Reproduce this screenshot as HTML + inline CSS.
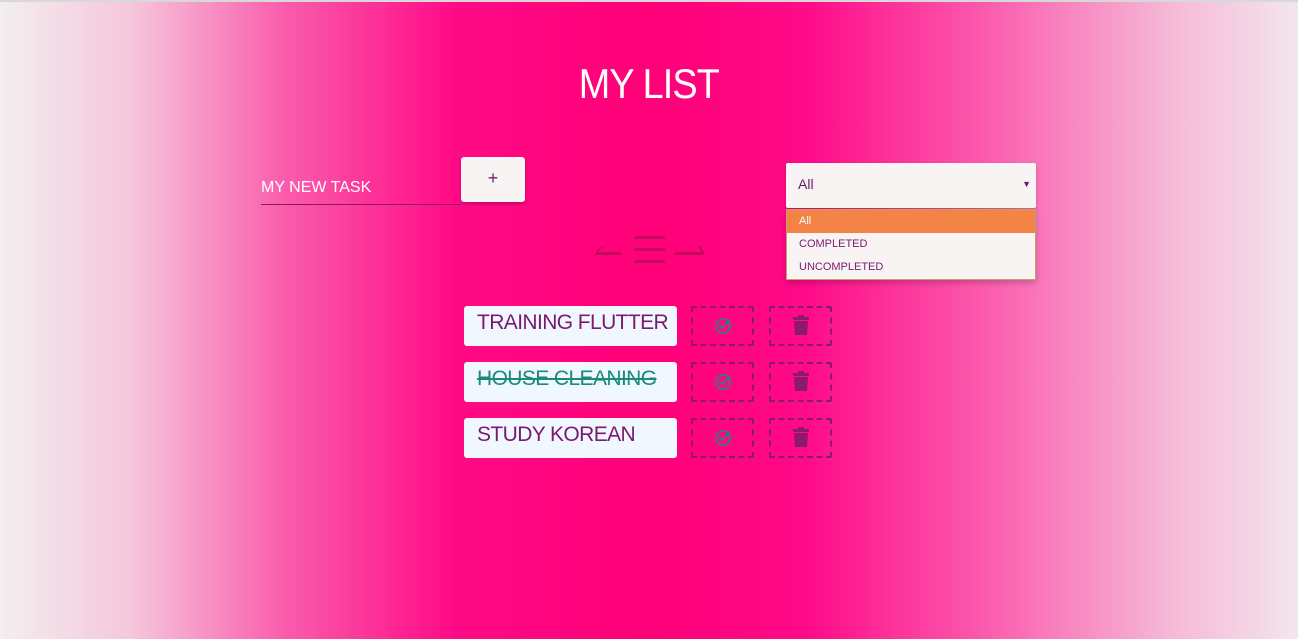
<!DOCTYPE html>
<html><head><style>
html,body{margin:0;padding:0;width:1298px;height:639px;overflow:hidden}
body{position:relative;font-family:"Liberation Sans",sans-serif;
background:linear-gradient(90deg,#f3eef0 0%,#f5c7dc 10%,#fa5cac 22%,#ff0a86 35%,#ff0078 50%,#ff0a88 62%,#fb5cae 76%,#f6b7d6 90%,#f3e6ee 100%);}
body:before{content:"";position:absolute;left:0;top:0;width:1298px;height:2px;background:#d8d8d8}
.t{position:absolute;left:0;width:1298px;top:60px;text-align:center;color:#fff;font-size:42px;font-weight:normal;letter-spacing:-1px}
.t span{display:inline-block;transform:scaleX(0.9)}
.inp{position:absolute;left:261px;top:178px;width:200px;height:26px;border-bottom:1px solid #8a1a5a;color:#fff;font-size:16px;line-height:20px}
.add{position:absolute;left:461px;top:157px;width:64px;height:45px;background:#f9f4f4;border-radius:3px;box-shadow:0 2px 3px rgba(0,0,0,.25);color:#7a1a6e;text-align:center;line-height:43px;font-size:18px}
.sel{position:absolute;left:786px;top:163px;width:250px;height:45px;background:#f9f4f4;border-radius:2px;box-shadow:0 2px 4px rgba(0,0,0,.2)}
.sel span{position:absolute;left:12px;top:13px;color:#6a1a6e;font-size:14px}
.sel i{position:absolute;right:5px;top:16px;font-style:normal;font-size:9px;color:#6a1a6e}
.dd{position:absolute;left:786px;top:209px;width:248px;height:69px;background:#f9f4f4;border:1px solid #c3a06a;box-shadow:0 3px 6px rgba(0,0,0,.2)}
.dd div{height:23px;line-height:23px;padding-left:12px;font-size:11px;color:#7a1a6e}
.dd .on{background:#f38446;color:#fff}
.task{position:absolute;left:464px;width:213px;height:40px;background:#f0f7ff;border-radius:3px;color:#7a1a6e;font-size:21px;line-height:34px;padding-left:13px;box-sizing:border-box;white-space:nowrap;overflow:hidden;letter-spacing:-0.6px}
.done{color:#1a8a7a;text-decoration:line-through}
.b{position:absolute;width:59px;height:36px;border:2px dashed #8a1a6e;border-radius:2px}
</style></head><body>
<div class="t"><span>MY LIST</span></div>
<div class="inp">MY NEW TASK</div>
<div class="add">+</div>
<div class="sel"><span>All</span><i>▼</i></div>
<div class="dd"><div class="on">All</div><div>COMPLETED</div><div>UNCOMPLETED</div></div>
<svg style="position:absolute;left:594px;top:234px" width="112" height="32" viewBox="0 0 112 32">
<g fill="#c20a5e"><rect x="2" y="18" width="25" height="3"/><polygon points="2,18 8,12 10,12 4,18"/>
<rect x="40" y="2" width="31" height="3"/><rect x="40" y="14" width="31" height="3"/><rect x="40" y="26" width="31" height="3"/>
<rect x="81" y="18" width="28" height="3"/><polygon points="109,21 104,12 106,12 110,19"/></g></svg>
<div class="task" style="top:306px">TRAINING FLUTTER</div>
<div class="task done" style="top:362px">HOUSE CLEANING</div>
<div class="task" style="top:418px">STUDY KOREAN</div>
<div class="b" style="left:691px;top:306px"></div><div class="b" style="left:769px;top:306px"></div>
<div class="b" style="left:691px;top:362px"></div><div class="b" style="left:769px;top:362px"></div>
<div class="b" style="left:691px;top:418px"></div><div class="b" style="left:769px;top:418px"></div>
<svg style="position:absolute;left:0;top:0" width="1298" height="639">
<g fill="none" stroke="#1a8a7a" stroke-width="1.6">
<circle cx="723" cy="326" r="7"/><path d="M719 325l3 3 8-8"/>
<circle cx="723" cy="382" r="7"/><path d="M719 381l3 3 8-8"/>
<circle cx="723" cy="438" r="7"/><path d="M719 437l3 3 8-8"/></g>
<g fill="#8a1a6e">
<path d="M793 317h16v3h-16zM798 315h6v2h-6zM794 321h14l-1 14h-12z"/>
<path d="M793 373h16v3h-16zM798 371h6v2h-6zM794 377h14l-1 14h-12z"/>
<path d="M793 429h16v3h-16zM798 427h6v2h-6zM794 433h14l-1 14h-12z"/></g>
</svg>
</body></html>
